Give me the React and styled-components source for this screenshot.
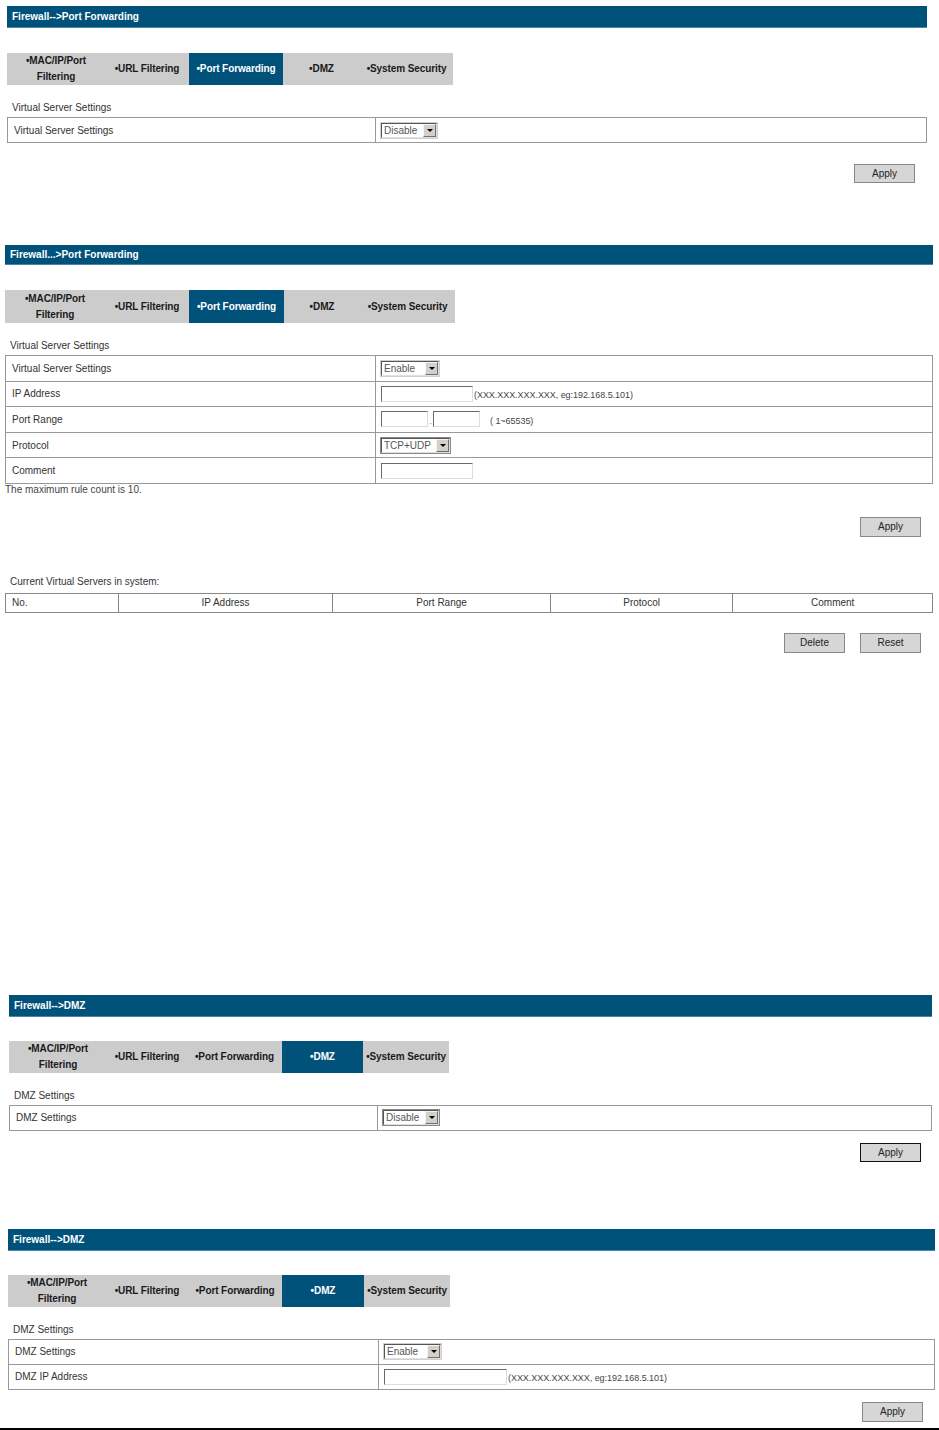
import React from "react";
import styled, { createGlobalStyle } from "styled-components";

const GlobalStyle = createGlobalStyle`
  body {
    margin: 0;
    background: #ffffff;
    font-family: "Liberation Sans", Arial, sans-serif;
  }
`;

const BLUE = "#00527a";

const TABS = [
  ["•MAC/IP/Port", "Filtering"],
  ["•URL Filtering"],
  ["•Port Forwarding"],
  ["•DMZ"],
  ["•System Security"],
];

const Page = () => {
  return (
    <Wrapper>
      <GlobalStyle />

      {/* first shot: port forwarding disabled */}
      <Screen $left={7} $width={920} $top={6}>
        <Header $h={22}>Firewall--&gt;Port Forwarding</Header>
        <TabBar active={2} widths={[98, 84, 94, 77, 93]} />
        <SectionTitle>Virtual Server Settings</SectionTitle>
        <SettingsTable>
          <Row>
            <LabelCell>Virtual Server Settings</LabelCell>
            <ValueCell>
              <FakeSelect value="Disable" width={56} />
            </ValueCell>
          </Row>
        </SettingsTable>
        <ButtonRow $top={21}>
          <Button>Apply</Button>
        </ButtonRow>
      </Screen>

      {/* second shot: port forwarding enabled */}
      <Screen $left={5} $width={928} $top={62}>
        <Header $h={20}>Firewall...&gt;Port Forwarding</Header>
        <TabBar active={2} widths={[100, 84, 95, 76, 95]} height={33} />
        <SectionTitle>Virtual Server Settings</SectionTitle>
        <SettingsTable>
          <Row $h={24.6}>
            <LabelCell $w={370}>Virtual Server Settings</LabelCell>
            <ValueCell>
              <FakeSelect value="Enable" width={58} />
            </ValueCell>
          </Row>
          <Row $h={24.6}>
            <LabelCell $w={370}>IP Address</LabelCell>
            <ValueCell>
              <TextBox $w={92} />
              <Hint>(XXX.XXX.XXX.XXX, eg:192.168.5.101)</Hint>
            </ValueCell>
          </Row>
          <Row $h={24.6}>
            <LabelCell $w={370}>Port Range</LabelCell>
            <ValueCell>
              <TextBox $w={47} />
              <Dash>-</Dash>
              <TextBox $w={47} />
              <Hint $gap={10}>( 1~65535)</Hint>
            </ValueCell>
          </Row>
          <Row $h={24.6}>
            <LabelCell $w={370}>Protocol</LabelCell>
            <ValueCell>
              <FakeSelect value="TCP+UDP" width={69} dark />
            </ValueCell>
          </Row>
          <Row $h={24.6}>
            <LabelCell $w={370}>Comment</LabelCell>
            <ValueCell>
              <TextBox $w={92} />
            </ValueCell>
          </Row>
        </SettingsTable>
        <Note>The maximum rule count is 10.</Note>
        <ButtonRow $top={21}>
          <Button $h={20}>Apply</Button>
        </ButtonRow>
        <ListTitle>Current Virtual Servers in system:</ListTitle>
        <ListTable>
          <ListHead $w={112} $left>No.</ListHead>
          <ListHead $w={215}>IP Address</ListHead>
          <ListHead $w={218}>Port Range</ListHead>
          <ListHead $w={183}>Protocol</ListHead>
          <ListHead $w={200}>Comment</ListHead>
        </ListTable>
        <ButtonRow $top={20}>
          <Button $h={20}>Delete</Button>
          <Button $h={20}>Reset</Button>
        </ButtonRow>
      </Screen>

      {/* third shot: DMZ disabled */}
      <Screen $left={9} $width={923} $top={342}>
        <Header $h={22}>Firewall--&gt;DMZ</Header>
        <TabBar active={3} widths={[98, 80, 95, 81, 86]} top={24} />
        <SectionTitle>DMZ Settings</SectionTitle>
        <SettingsTable>
          <Row>
            <LabelCell>DMZ Settings</LabelCell>
            <ValueCell>
              <FakeSelect value="Disable" width={56} dark />
            </ValueCell>
          </Row>
        </SettingsTable>
        <ButtonRow $top={12} $right={11}>
          <Button $dark>Apply</Button>
        </ButtonRow>
      </Screen>

      {/* fourth shot: DMZ enabled */}
      <Screen $left={8} $width={927} $top={67}>
        <Header $h={22}>Firewall--&gt;DMZ</Header>
        <TabBar active={3} widths={[98, 82, 94, 82, 86]} top={24} />
        <SectionTitle>DMZ Settings</SectionTitle>
        <SettingsTable>
          <Row>
            <LabelCell $w={370}>DMZ Settings</LabelCell>
            <ValueCell>
              <FakeSelect value="Enable" width={57} />
            </ValueCell>
          </Row>
          <Row>
            <LabelCell $w={370}>DMZ IP Address</LabelCell>
            <ValueCell>
              <TextBox $w={123} />
              <Hint>(XXX.XXX.XXX.XXX, eg:192.168.5.101)</Hint>
            </ValueCell>
          </Row>
        </SettingsTable>
        <ButtonRow $top={12}>
          <Button $h={20}>Apply</Button>
        </ButtonRow>
      </Screen>

      <BottomRule />
    </Wrapper>
  );
};

const TabBar = ({ active, widths, height = 32, top = 25 }) => (
  <Tabs $h={height} $top={top}>
    {TABS.map((lines, i) => (
      <Tab key={lines[0]} $w={widths[i]} $active={i === active}>
        {lines.map((l) => (
          <TabLine key={l}>{l}</TabLine>
        ))}
      </Tab>
    ))}
  </Tabs>
);

const FakeSelect = ({ value, width, dark }) => (
  <SelectBox $w={width} $dark={dark}>
    <SelectText>{value}</SelectText>
    <SelectArrow>
      <Triangle />
    </SelectArrow>
  </SelectBox>
);

const Wrapper = styled.div`
  display: flex;
  flex-direction: column;
  width: 939px;
  height: 1430px;
  overflow: hidden;
`;

const Screen = styled.section`
  display: flex;
  flex-direction: column;
  margin-left: ${(p) => p.$left}px;
  width: ${(p) => p.$width}px;
  margin-top: ${(p) => p.$top}px;
`;

const Header = styled.div`
  height: ${(p) => p.$h}px;
  line-height: ${(p) => p.$h}px;
  background: ${BLUE};
  border-bottom: 1px solid #4d86a3;
  box-sizing: border-box;
  color: #ffffff;
  font-size: 10px;
  font-weight: bold;
  padding-left: 5px;
`;

const Tabs = styled.div`
  display: flex;
  margin-top: ${(p) => p.$top}px;
  height: ${(p) => p.$h}px;
  align-self: flex-start;
  background: #cccccc;
`;

const Tab = styled.div`
  width: ${(p) => p.$w}px;
  display: flex;
  flex-direction: column;
  align-items: center;
  justify-content: center;
  font-size: 10px;
  font-weight: bold;
  line-height: 16px;
  color: ${(p) => (p.$active ? "#ffffff" : "#1a1a1a")};
  background: ${(p) => (p.$active ? BLUE : "transparent")};
`;

const TabLine = styled.span`
  white-space: nowrap;
  letter-spacing: -0.1px;
`;

const SectionTitle = styled.div`
  margin-top: 16px;
  height: 14px;
  line-height: 14px;
  padding-left: 5px;
  font-size: 10px;
  color: #333333;
`;

const SettingsTable = styled.div`
  margin-top: 2px;
  display: flex;
  flex-direction: column;
  border: 1px solid #999999;
  border-bottom: none;
`;

const Row = styled.div`
  display: flex;
  height: ${(p) => p.$h || 24}px;
  border-bottom: 1px solid #999999;
`;

const LabelCell = styled.div`
  width: ${(p) => p.$w || 368}px;
  flex: none;
  display: flex;
  align-items: center;
  padding-left: 6px;
  box-sizing: border-box;
  border-right: 1px solid #999999;
  font-size: 10px;
  color: #333333;
`;

const ValueCell = styled.div`
  flex: 1;
  display: flex;
  align-items: center;
  padding-left: 5px;
`;

const SelectBox = styled.div`
  width: ${(p) => p.$w}px;
  height: 15px;
  box-sizing: border-box;
  display: flex;
  align-items: center;
  background: #ffffff;
  border: 1px solid;
  border-color: #555555 #e0e0e0 #e0e0e0 #555555;
  outline: 1px solid ${(p) => (p.$dark ? "#888888" : "#cfcfcf")};
`;

const SelectText = styled.span`
  flex: 1;
  padding-left: 2px;
  font-size: 10px;
  color: #555555;
  line-height: 13px;
`;

const SelectArrow = styled.span`
  width: 13px;
  height: 13px;
  box-sizing: border-box;
  background: #d4d0c8;
  border: 1px solid;
  border-color: #f4f4f4 #707070 #707070 #f4f4f4;
  display: flex;
  align-items: center;
  justify-content: center;
`;

const Triangle = styled.span`
  width: 0;
  height: 0;
  border-left: 3px solid transparent;
  border-right: 3px solid transparent;
  border-top: 3px solid #000000;
`;

const TextBox = styled.span`
  width: ${(p) => p.$w}px;
  height: 16px;
  box-sizing: border-box;
  background: #ffffff;
  border: 1px solid;
  border-color: #6a6a6a #dddddd #dddddd #6a6a6a;
`;

const Dash = styled.span`
  width: 5px;
  font-size: 8px;
  color: #999999;
  text-align: center;
  padding-top: 6px;
`;

const Hint = styled.span`
  margin-left: ${(p) => p.$gap || 1}px;
  font-size: 9px;
  color: #444444;
  padding-top: 3px;
  letter-spacing: -0.05px;
`;

const Note = styled.div`
  height: 12px;
  line-height: 12px;
  font-size: 10px;
  color: #444444;
`;

const ButtonRow = styled.div`
  display: flex;
  justify-content: flex-end;
  gap: 15px;
  margin-top: ${(p) => p.$top}px;
  padding-right: ${(p) => p.$right ?? 12}px;
`;

const Button = styled.div`
  width: 61px;
  height: ${(p) => p.$h || 19}px;
  box-sizing: border-box;
  display: flex;
  align-items: center;
  justify-content: center;
  background: #d6d6d6;
  border: 1px solid ${(p) => (p.$dark ? "#111111" : "#888888")};
  font-size: 10px;
  color: #222222;
`;

const ListTitle = styled.div`
  margin-top: 38px;
  height: 14px;
  line-height: 14px;
  padding-left: 5px;
  font-size: 10px;
  color: #333333;
`;

const ListTable = styled.div`
  margin-top: 4px;
  display: flex;
  height: 20px;
  box-sizing: border-box;
  border: 1px solid #888888;
`;

const ListHead = styled.div`
  width: ${(p) => p.$w}px;
  box-sizing: border-box;
  display: flex;
  align-items: center;
  justify-content: ${(p) => (p.$left ? "flex-start" : "center")};
  padding-left: ${(p) => (p.$left ? 6 : 0)}px;
  border-left: 1px solid #888888;
  font-size: 10px;
  color: #333333;
  &:first-child {
    border-left: none;
  }
`;

const BottomRule = styled.div`
  margin-top: 6px;
  height: 3px;
  flex: none;
  background: #000000;
`;

export default Page;
